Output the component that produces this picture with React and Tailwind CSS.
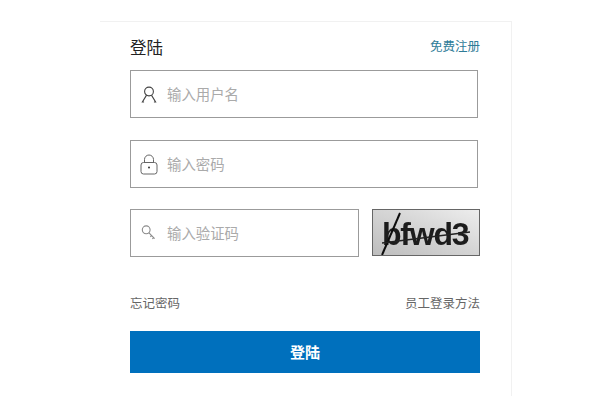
import React from "react";

function User() {
  return (
    <svg width="16" height="17" viewBox="0 0 16 17" fill="none" stroke="#444" strokeWidth="1.1">
      <circle cx="8" cy="5.5" r="4.4" />
      <path d="M5.4 9.4 L1.4 16 H2.6 M10.6 9.4 L14.6 16 H13.4" strokeLinecap="round" />
    </svg>
  );
}
function Lock() {
  return (
    <svg width="18" height="21" viewBox="0 0 18 21" fill="none" stroke="#666" strokeWidth="1">
      <path d="M4.5 8.5 V5.5 a4.5 4.5 0 0 1 9 0 V8.5" />
      <rect x="1" y="8.5" width="16" height="11.5" rx="2.5" />
      <circle cx="9" cy="13.5" r="1" fill="#333" stroke="none" />
    </svg>
  );
}
function Key() {
  return (
    <svg width="16" height="18" viewBox="0 0 16 18" fill="none" stroke="#8a8a8a" strokeWidth="1.1">
      <circle cx="5.2" cy="4.8" r="3.9" />
      <path d="M8 7.8 L13.6 13.6 M10.6 10.4 L9.4 11.8 M12.6 12.6 L11.4 14" />
    </svg>
  );
}
function Captcha() {
  return (
    <svg width="106" height="45" viewBox="0 0 106 45" className="block">
      <defs>
        <linearGradient id="g" x1="0" y1="1" x2="1" y2="0">
          <stop offset="0" stopColor="#bdbdbd" />
          <stop offset="0.55" stopColor="#d6d6d6" />
          <stop offset="1" stopColor="#ededed" />
        </linearGradient>
        <filter id="b"><feGaussianBlur stdDeviation="0.7" /></filter>
      </defs>
      <rect width="106" height="45" fill="url(#g)" />
      <g filter="url(#b)">
        <text x="9" y="35" fontFamily="'Liberation Sans',sans-serif" fontWeight="700" fontSize="32" fill="#1c1c1c" letterSpacing="-1.2">bfwd3</text>
        <path d="M9 45 L27 3" stroke="#111" strokeWidth="2" />
        <path d="M9 33 L97 22" stroke="#222" strokeWidth="1.4" />
      </g>
    </svg>
  );
}

function Field({ icon, text, width }) {
  return (
    <div className={`flex h-12 items-center border border-[#9b9b9b] bg-white ${width}`}>
      <div className="flex w-[36px] justify-center pr-[1px] pt-[1px]">{icon}</div>
      <span className="pt-[4px] text-[14.4px] text-[#aaaaaa]">{text}</span>
    </div>
  );
}

export default function App() {
  return (
    <div className="h-[400px] w-[600px] overflow-hidden bg-white pt-[21px] pl-[100px] font-['Liberation_Sans','Noto_Sans_CJK_SC',sans-serif]">
      <div className="h-[375px] w-[412px] border-t border-r border-[#f1f1f1] pl-[30px]">
        <div className="flex h-[48px] w-[350px] items-center justify-between pt-1">
          <span className="text-[16.5px] text-[#222222]">登陆</span>
          <span className="pb-[2px] text-[12.5px] text-[#2f7c98]">免费注册</span>
        </div>
        <div className="flex flex-col gap-[22px]">
          <Field icon={<User />} text="输入用户名" width="w-[348px]" />
          <Field icon={<Lock />} text="输入密码" width="w-[348px]" />
        </div>
        <div className="mt-[21px] flex w-[350px] items-start justify-between">
          <Field icon={<Key />} text="输入验证码" width="w-[229px]" />
          <div className="border border-[#666666]"><Captcha /></div>
        </div>
        <div className="mt-[38px] flex h-4 w-[350px] items-center justify-between pt-[3px] text-[12.5px] text-[#666666]">
          <span>忘记密码</span>
          <span>员工登录方法</span>
        </div>
        <div className="mt-5 flex h-[42px] w-[350px] items-center justify-center bg-[#0070bd] pt-[2px] text-[15px] font-bold text-white">登陆</div>
      </div>
    </div>
  );
}
